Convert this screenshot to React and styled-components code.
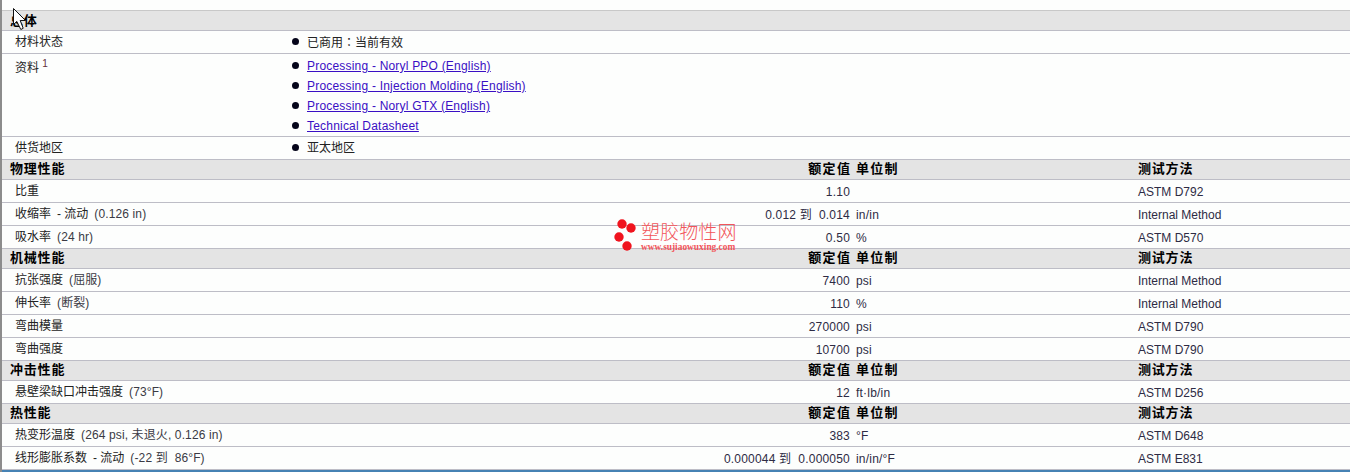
import { createGlobalStyle, styled } from "styled-components"

const GlobalStyle = createGlobalStyle`
    html, body {
        margin: 0;
        padding: 0;
        background: #fdfefd;
    }
    body {
        font-family: "Liberation Sans", "Noto Sans CJK SC", sans-serif;
        font-size: 12px;
        color: #222;
        overflow: hidden;
    }
`

const physical = [
    { name: "比重", value: "1.10", unit: "", method: "ASTM D792" },
    { name: "收缩率", flow: true, note: "(0.126 in)", value: "0.012 到  0.014", unit: "in/in", method: "Internal Method" },
    { name: "吸水率", note: "(24 hr)", value: "0.50", unit: "%", method: "ASTM D570" },
]
const mechanical = [
    { name: "抗张强度", note: "(屈服)", value: "7400", unit: "psi", method: "Internal Method" },
    { name: "伸长率", note: "(断裂)", value: "110", unit: "%", method: "Internal Method" },
    { name: "弯曲模量", value: "270000", unit: "psi", method: "ASTM D790" },
    { name: "弯曲强度", value: "10700", unit: "psi", method: "ASTM D790" },
]
const impact = [
    { name: "悬壁梁缺口冲击强度", note: "(73°F)", value: "12", unit: "ft·lb/in", method: "ASTM D256" },
]
const thermal = [
    { name: "热变形温度", note: "(264 psi, 未退火, 0.126 in)", value: "383", unit: "°F", method: "ASTM D648" },
    { name: "线形膨胀系数", flow: true, note: "(-22 到  86°F)", value: "0.000044 到  0.000050", unit: "in/in/°F", method: "ASTM E831" },
]

const Section = ({ title, rows }) => (
    <>
        <HeaderRow>
            <HeaderTitle>{title}</HeaderTitle>
            <HeaderValue>额定值</HeaderValue>
            <HeaderUnit>单位制</HeaderUnit>
            <div>测试方法</div>
        </HeaderRow>
        {rows.map((row) => (
            <DataRow key={row.name}>
                <NameCell>
                    <span>{row.name}</span>
                    {row.flow && <Flow>- 流动</Flow>}
                    {row.note && <Note>{row.note}</Note>}
                </NameCell>
                <ValueCell>{row.value}</ValueCell>
                <UnitCell>{row.unit}</UnitCell>
                <MethodCell>{row.method}</MethodCell>
            </DataRow>
        ))}
    </>
)

const App = () => {
    return (
        <Page>
            <GlobalStyle />
            <TopGap />
            <InfoHeader>总体</InfoHeader>
            <InfoRow>
                <InfoLabel>材料状态</InfoLabel>
                <BulletList>
                    <li>已商用<Colon>：</Colon>当前有效</li>
                </BulletList>
            </InfoRow>
            <InfoRow>
                <InfoLabel $offset={3}>
                    资料 <Sup>1</Sup>
                </InfoLabel>
                <BulletList $links>
                    <li><a href="#norylppo">Processing - Noryl PPO (English)</a></li>
                    <li><a href="#molding">Processing - Injection Molding (English)</a></li>
                    <li><a href="#norylgtx">Processing - Noryl GTX (English)</a></li>
                    <li><a href="#datasheet">Technical Datasheet</a></li>
                </BulletList>
            </InfoRow>
            <InfoRow>
                <InfoLabel>供货地区</InfoLabel>
                <BulletList>
                    <li>亚太地区</li>
                </BulletList>
            </InfoRow>
            <Section title="物理性能" rows={physical} />
            <Section title="机械性能" rows={mechanical} />
            <Section title="冲击性能" rows={impact} />
            <Section title="热性能" rows={thermal} />
            <BottomBar><span>(2)</span></BottomBar>
            <Watermark>
                <svg width="24" height="32" viewBox="0 0 24 32">
                    <circle cx="8" cy="5" r="4.7" fill="#f0141e" />
                    <circle cx="17" cy="9" r="4.7" fill="#f0141e" />
                    <circle cx="5" cy="18" r="4.7" fill="#f0141e" />
                    <circle cx="13" cy="27" r="4.7" fill="#f0141e" />
                </svg>
                <WatermarkText>
                    <strong>塑胶物性网</strong>
                    <small>www.sujiaowuxing.com</small>
                </WatermarkText>
            </Watermark>
            <Cursor width="14" height="23" viewBox="0 0 14 23">
                <path d="M0.5 0.5 L0.5 16.5 L3.8 13.4 L7.8 21.5 L10.2 20.3 L7.2 12.5 L12.5 12.5 Z" fill="#fff" stroke="#111" strokeWidth="1" />
            </Cursor>
        </Page>
    )
}

const Page = styled.div`
    position: relative;
    width: 1350px;
    height: 472px;
    box-sizing: border-box;
    border-left: 2px solid #8c8c8c;
    overflow: hidden;
`
const TopGap = styled.div`
    height: 10px;
`
const band = `
    box-sizing: border-box;
    height: 21px;
    background: #e4e4e4;
    border-top: 1px solid #c8c8c8;
    border-bottom: 1px solid #bdbdc6;
    color: #000;
    font-weight: bold;
    font-size: 13px;
    letter-spacing: 0.8px;
    line-height: 19px;
`
const InfoHeader = styled.div`
    ${band}
    padding-left: 8px;
`
const InfoRow = styled.div`
    display: flex;
    box-sizing: border-box;
    border-bottom: 1px solid #bdbdc6;
    padding: 1px 0;
    line-height: 20px;
`
const InfoLabel = styled.div`
    width: 290px;
    padding-left: 13px;
    padding-top: ${(p) => p.$offset || 0}px;
    box-sizing: border-box;
    color: #222;
`
const Sup = styled.sup`
    font-size: 10px;
    line-height: 0;
    color: #63303a;
`
const Colon = styled.span`
    font-family: "Noto Sans CJK TC", sans-serif;
`
const BulletList = styled.ul`
    margin: 0;
    padding: 0;
    list-style: none;
    li {
        position: relative;
        height: 20px;
        padding-left: 15px;
    }
    li::before {
        content: "";
        position: absolute;
        left: 0;
        top: ${(p) => (p.$links ? 7 : 6)}px;
        width: 7px;
        height: 7px;
        border-radius: 50%;
        background: #05051a;
    }
    a {
        position: relative;
        top: 1px;
        color: #3a0fc4;
        letter-spacing: 0.2px;
    }
`
const rowGrid = `
    display: grid;
    grid-template-columns: 848px 288px 1fr;
`
const HeaderRow = styled.div`
    ${rowGrid}
    ${band}
    height: 20px;
    border-top: 0;
    line-height: 18px;
`
const HeaderTitle = styled.div`
    position: absolute;
    padding-left: 8px;
`
const HeaderValue = styled.div`
    text-align: right;
    letter-spacing: 1.4px;
    margin-right: -1.4px;
`
const HeaderUnit = styled.div`
    padding-left: 6px;
    letter-spacing: 1.2px;
`
const DataRow = styled.div`
    ${rowGrid}
    box-sizing: border-box;
    height: 23px;
    border-bottom: 1px solid #bdbdc6;
    line-height: 25px;
`
const NameCell = styled.div`
    grid-column: 1;
    grid-row: 1;
    padding-left: 13px;
    line-height: 23px;
    white-space: pre;
`
const Flow = styled.span`
    margin-left: 6px;
`
const Note = styled.span`
    margin-left: 6px;
    color: #3a3a44;
    letter-spacing: 0.12px;
`
const ValueCell = styled.div`
    grid-column: 1;
    grid-row: 1;
    text-align: right;
    white-space: pre;
    letter-spacing: 0.2px;
    color: #2d2b44;
`
const UnitCell = styled.div`
    padding-left: 6px;
    letter-spacing: 0.2px;
    color: #2d2b44;
`
const MethodCell = styled.div`
    color: #2d2b44;
`
const BottomBar = styled.div`
    height: 3px;
    background: #4682b4;
    position: relative;
    overflow: hidden;
    span {
        position: absolute;
        left: 698px;
        top: 0;
        color: #fff;
        font-size: 13px;
        letter-spacing: 3px;
        line-height: 13px;
    }
`
const Watermark = styled.div`
    position: absolute;
    left: 612px;
    top: 219px;
    display: flex;
    gap: 3px;
    pointer-events: none;
`
const WatermarkText = styled.div`
    display: flex;
    flex-direction: column;
    strong {
        font-family: "Noto Sans CJK SC", sans-serif;
        font-weight: 300;
        font-size: 19px;
        line-height: 24px;
        letter-spacing: 0.1px;
        color: #f2555a;
    }
    small {
        font-family: "Liberation Serif", serif;
        font-weight: bold;
        font-size: 9.4px;
        line-height: 9px;
        color: #f2555a;
    }
`
const Cursor = styled.svg`
    position: absolute;
    left: 11px;
    top: 8px;
`

export default App
